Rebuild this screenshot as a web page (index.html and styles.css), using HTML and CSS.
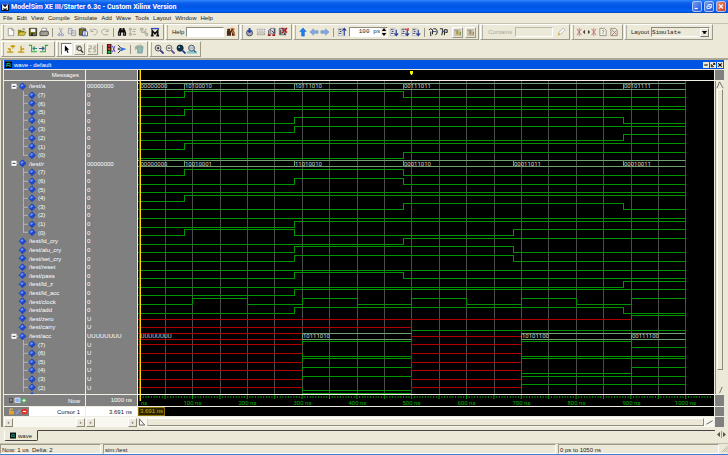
FILE: index.html
```html
<!DOCTYPE html>
<html lang="en">
<head>
<meta charset="utf-8">
<title>ModelSim XE III/Starter 6.3c - Custom Xilinx Version</title>
<link rel="stylesheet" href="styles.css">
</head>
<body>
<svg class="defs" aria-hidden="true">
  <symbol id="app" viewBox="0 0 9 9"><path fill="#111" d="M0 0h9v9H0z"/><path fill="#3a63d8" d="M0 0h9v2H0z"/><path fill="none" stroke="#fff" stroke-width="1.4" d="M2 8V3l2.5 3L7 3v5"/></symbol>
  <symbol id="wav" viewBox="0 0 8 8"><path d="M0 0h8v8H0z"/><path fill="none" stroke="#8aa" stroke-width=".6" d="M0 .3h8"/><path fill="none" stroke="#1fd0a0" d="M1 3.500h2v-1h2v1h2M1 6h1V5h3v1h2"/></symbol>
  <symbol id="new" viewBox="0 0 11 11"><path fill="#fff" stroke="#777" stroke-width=".7" d="M2.500 1.500h4l2 2v6h-6z"/><path fill="none" stroke="#555" stroke-width=".7" d="M6.500 1.500v2h2"/></symbol>
  <symbol id="open" viewBox="0 0 11 11"><path fill="#8a8420" d="M1 3h3l1 1h3v2H3L1 9z"/><path fill="#d8c838" stroke="#55500a" stroke-width=".6" d="M1 9.200 3 5.500h7L8 9.200z"/><path fill="none" stroke="#333" stroke-width=".7" d="M6 2.500q2-1.500 3 .5"/></symbol>
  <symbol id="save" viewBox="0 0 11 11"><path fill="#77751c" stroke="#222" stroke-width=".9" d="M1.500 1.500h8v8h-8z"/><path fill="#f4f4f0" d="M3 2h5v3.500H3z"/><path fill="#222" d="M3.500 7h4v2.500h-4z"/><path fill="#ddd" d="M6 7.500h1V9H6z"/></symbol>
  <symbol id="print" viewBox="0 0 11 11"><path fill="#fff" stroke="#555" stroke-width=".6" d="M3.500 1.500h5L7.500 5H2.500z"/><path fill="#9a9a96" stroke="#333" stroke-width=".8" d="M1 5.500 2.500 4.500h7l.8 1v3L9 9.500H1z"/><path fill="#d8c838" d="M6 7h2v1H6z"/></symbol>
  <symbol id="cut" viewBox="0 0 11 11"><path fill="none" stroke="#98a0b8" d="M3.500 1 6.500 7M7 1 4 7"/><g fill="none" stroke="#8088c0"><circle cx="3.500" cy="8.500" r="1.200"/><circle cx="7" cy="8.500" r="1.200"/></g></symbol>
  <symbol id="copy" viewBox="0 0 11 11"><path fill="#e8e6e0" stroke="#8a90a8" stroke-width=".8" d="M1.500 1.500h4v6h-4zM5 4h4.500v5.500H5z"/><path stroke="#99a" stroke-width=".6" d="M6 6h2.500M6 7.500h2.500M2.500 3.500h2"/></symbol>
  <symbol id="paste" viewBox="0 0 11 11"><path fill="#7a7618" stroke="#222" stroke-width=".8" d="M1.500 2h7v7h-7z"/><path fill="#ccc" stroke="#222" stroke-width=".5" d="M3.500 1h3v1.500h-3z"/><path fill="#fff" stroke="#1c2f98" stroke-width=".8" d="M5 4.500h4.500l1 1.200v4H5z"/><path stroke="#1c2f98" stroke-width=".6" d="M6 6.500h3M6 8h3"/></symbol>
  <symbol id="undo" viewBox="0 0 11 11"><path fill="none" stroke="#aaa89e" d="M2 2v3h3M2.500 4.500Q5 .8 8 3t-1 5.500H5"/></symbol>
  <symbol id="redo" viewBox="0 0 11 11"><path fill="none" stroke="#aaa89e" d="M9 2v3H6M8.500 4.500Q6 .8 3 3t1 5.500h5"/></symbol>
  <symbol id="find" viewBox="0 0 11 11"><path fill="#111" d="M3 1h2v2h1V1h2l2 5v3.500H6.500V6h-2v3.500H1V6z"/><path stroke="#fff" stroke-width=".6" d="M2.500 6v2.500M8 6v2.500"/></symbol>
  <symbol id="tree" viewBox="0 0 11 11"><g fill="none" stroke="#a5a296"><path d="M1.500 1.500h2v2h-2zM1.500 7h2v2h-2zM5 2.500h4M5 8h4M2.500 4v3M5 5h3"/></g></symbol>
  <symbol id="tree2" viewBox="0 0 11 11"><g fill="none" stroke="#a5a296"><path d="M1.500 1.500h3v2h-3zM5.500 4.500h2v2h-2zM7.500 7h2v2.500h-2zM3 4v2h2M6.500 2.500h2"/></g></symbol>
  <symbol id="mm" viewBox="0 0 11 11"><path fill="#3348c8" d="M1 1h9v1.500H1z"/><path fill="none" stroke="#111" stroke-width="1.800" d="M2.500 10V4l3 3.500 3-3.500v6M1 9.500h3M7 9.500h3"/></symbol>
  <symbol id="help-find" viewBox="0 0 11 11"><path fill="#4a2a18" d="M1.500 2h3v2h1V2h2l2 4v3.500H6.500V6h-1v3.500H1V6z"/><path fill="none" stroke="#d87830" stroke-width="1.300" d="M5 2.500q2-2 4 0L7 5l3 4"/></symbol>
  <symbol id="c1" viewBox="0 0 11 11"><circle cx="5" cy="6.500" r="3.300" fill="#aab" stroke="#445"/><path fill="#2540b0" d="M4 1h2v3h2L5 7 2 4h2z"/></symbol>
  <symbol id="c2" viewBox="0 0 11 11"><path fill="none" stroke="#77a" stroke-dasharray="1 1" d="M1 2.500h9M1 4.500h9"/><path fill="#aaa89e" d="M1 6h9v3H1z"/><path stroke="#fff" stroke-width=".7" d="M2 7.500h7"/></symbol>
  <symbol id="c3" viewBox="0 0 11 11"><path fill="#e4e4ee" stroke="#667" stroke-width=".8" d="M4 1.500h5v6H4z"/><path fill="none" stroke="#223" d="M2 9V4l2-2M5 4l3 3M8 2v5"/><path fill="#a01818" d="M1 8h3v2H1zM6 8h3v2H6z"/></symbol>
  <symbol id="c4" viewBox="0 0 11 11"><path fill="#d4d4dc" stroke="#445" stroke-width=".8" d="M1.500 1.500h7v7h-7z"/><path stroke="#222" d="M3 3v5M5 3l3 6"/><path stroke="#b01818" stroke-width="1.500" d="m4 1 6 5M10 1 4 7"/></symbol>
  <symbol id="up" viewBox="0 0 11 11"><path fill="#1684f4" stroke="#0b4ab0" stroke-width=".5" d="M5.500 1 9 5H7v5H4V5H2z"/></symbol>
  <symbol id="left" viewBox="0 0 11 11"><path fill="#7fa9e0" stroke="#5b86c0" stroke-width=".5" d="m1 5.500 4-3.500v2h5v3H5v2z"/></symbol>
  <symbol id="right" viewBox="0 0 11 11"><path fill="#7fa9e0" stroke="#5b86c0" stroke-width=".5" d="M10 5.500 6 2v2H1v3h5v2z"/></symbol>
  <symbol id="restart" viewBox="0 0 11 11"><path fill="#f4f4f4" stroke="#99a" stroke-width=".6" d="M1.500 1.500h5v8h-5z"/><path stroke="#334" d="M2 3h3M3 5h2M2 7h3"/><path fill="none" stroke="#223a9a" stroke-width="1.200" d="M8 9.500v-8M6 4l2-2.500L10 4"/></symbol>
  <symbol id="run" viewBox="0 0 11 11"><path fill="#f4f4f4" stroke="#99a" stroke-width=".6" d="M1.500 1.500h5v8h-5z"/><path stroke="#334" d="M2 3h3M3 5h2M2 7h3"/><path fill="none" stroke="#223a9a" stroke-width="1.200" d="M8 3v6M6 7l2 2.500L10 7"/></symbol>
  <symbol id="cont" viewBox="0 0 11 11"><use href="#run"/><path stroke="#d02828" stroke-width="1.200" d="M5 2.500h4M9 1v3"/></symbol>
  <symbol id="s1" viewBox="0 0 11 11"><path fill="none" stroke="#222" stroke-width="1.100" d="M1 3q2-2 4 0v5M3 5v5M6 2q3-1 4 2T8 9"/><path stroke="#334a9a" d="M5 5h4"/></symbol>
  <symbol id="s2" viewBox="0 0 11 11"><path fill="none" stroke="#222" stroke-width="1.100" d="M1 2h3v3l-1 4M6 9V3h3v3H7"/><path stroke="#334a9a" d="M3 5h4"/></symbol>
  <symbol id="prof" viewBox="0 0 11 11"><path fill="#c8c5b8" d="M1 1h9v9H1z"/><path fill="none" stroke="#888" d="M2 3h4v3"/><path stroke="#b86a50" stroke-width="1.500" d="M5 4v4"/><path stroke="#d0bb40" stroke-width="1.500" d="M7 3v6"/><path stroke="#6a9a68" stroke-width="1.500" d="M9 5v4"/></symbol>
  <symbol id="pencil" viewBox="0 0 11 11"><path fill="#fff" stroke="#999" stroke-width=".7" d="M3 6 8 1.500l2 1.500-5 5z"/><path fill="#c8a850" d="m3 6 2 2-3 1.500z"/></symbol>
  <symbol id="xl" viewBox="0 0 11 11"><path stroke="#c08080" stroke-width="1.100" d="m1 2 5 7M6 2 1 9"/><path stroke="#b07070" stroke-width=".8" d="M3.500 1v9"/><path fill="#444" d="M10 3v5L7.500 5.500z"/></symbol>
  <symbol id="xr" viewBox="0 0 11 11"><path stroke="#c08080" stroke-width="1.100" d="m5 2 5 7m0-7L5 9"/><path stroke="#b07070" stroke-width=".8" d="M7.500 1v9"/><path fill="#444" d="M1 3v5l2.500-2.500z"/></symbol>
  <symbol id="docq" viewBox="0 0 11 11"><path fill="#f4f2ea" stroke="#888678" stroke-width=".9" d="M2 1.500h5L9 3.500v6H2z"/><path fill="none" stroke="#99977a" d="M4.500 4q1-1 2 0L5.500 6v2"/></symbol>
  <symbol id="docx" viewBox="0 0 11 11"><path fill="#e8e4d8" stroke="#888678" stroke-width=".9" d="M2 1.500h5L9 3.500v6H2z"/><path stroke="#c07070" d="m3 3 5 5M8 4 3 9"/></symbol>
  <symbol id="k1" viewBox="0 0 11 11"><path fill="none" stroke="#c89a08" stroke-width="1.500" d="M1 9h7M4.500 9V5M2 5.500h3M5 2.500h5M7.500 1v4"/></symbol>
  <symbol id="k2" viewBox="0 0 11 11"><path fill="none" stroke="#c89a08" stroke-width="1.500" d="M1 9h7M4.500 9V2M4.500 5.500H8"/></symbol>
  <symbol id="e1" viewBox="0 0 11 11"><path fill="none" stroke="#35a84a" stroke-width="1.200" d="M1 1.500h3v7h6"/><path fill="none" stroke="#2b8f80" stroke-width="1.200" d="M10 5H5.500M7.500 3l-2 2 2 2"/></symbol>
  <symbol id="e2" viewBox="0 0 11 11"><path fill="none" stroke="#35a84a" stroke-width="1.200" d="M1 8.500h6v-7h3"/><path fill="none" stroke="#2b5f90" stroke-width="1.200" d="M0 5h5M3.500 3l2 2-2 2"/></symbol>
  <symbol id="ptr" viewBox="0 0 11 11"><path d="M3.500 1v7.500L5.300 7l1.500 3.300 1.200-.6-1.500-3.200h2.300z"/></symbol>
  <symbol id="zsel" viewBox="0 0 11 11"><path fill="#aaa89e" d="M1 1h6v6H1z"/><circle cx="5.500" cy="5" r="2.500" fill="#ddd" stroke="#222"/><path stroke="#222" stroke-width="1.500" d="m7 7 3 3"/></symbol>
  <symbol id="edit" viewBox="0 0 11 11"><path fill="none" stroke="#99968a" d="M1 2h3v3H1v4h3M7 2h3M6 9h3V6H7V4h3"/></symbol>
  <symbol id="stop" viewBox="0 0 11 11"><path fill="#222" d="M1 0h5v11H1z"/><circle cx="3.500" cy="2" r="1.500" fill="#e02020"/><circle cx="3.500" cy="5.500" r="1.400" fill="#d04818"/><circle cx="3.500" cy="9" r="1.500" fill="#20c030"/><path fill="none" stroke="#5a3cd0" d="m7 2 3 7M10 2 7 9"/></symbol>
  <symbol id="drv" viewBox="0 0 11 11"><path fill="none" stroke="#333" d="m1 1 3 3-3 1.500L4 7 1 10"/><path fill="#2878e0" d="M4 3.500 10.500 5.500 4 8z"/></symbol>
  <symbol id="cube" viewBox="0 0 11 11"><path fill="#8abcb0" stroke="#678" stroke-width=".6" d="M4 3h6l-1 7H4z"/><path stroke="#a0a898" stroke-width="1.500" d="M1 4 5 1.500M1 6l3-2M6 1l3 1.500"/><path stroke="#c8b850" d="M6 5v4"/></symbol>
  <symbol id="zin" viewBox="0 0 11 11"><circle cx="4.500" cy="4.500" r="3.200" fill="#eee" stroke="#333" stroke-width=".9"/><path stroke="#2a2a80" stroke-width="1.800" d="M7 7l3.500 3.500"/><path stroke="#111" d="M3 4.500h3M4.500 3v3"/></symbol>
  <symbol id="zout" viewBox="0 0 11 11"><circle cx="4.500" cy="4.500" r="3.200" fill="#eee" stroke="#555" stroke-width=".9"/><path stroke="#5a4a90" stroke-width="1.800" d="M7 7l3.500 3.500"/><path stroke="#111" d="M3 4.500h3"/></symbol>
  <symbol id="zfull" viewBox="0 0 11 11"><circle cx="4.500" cy="4.500" r="3.400" fill="#0a3558" stroke="#122"/><circle cx="3.500" cy="3.500" r="1" fill="#9cc"/><path stroke="#1a3aa0" stroke-width="1.800" d="M7 7l3.500 3.500"/></symbol>
  <symbol id="zcur" viewBox="0 0 11 11"><path fill="#7fc4cc" d="M0 8h11v2.500H0z"/><circle cx="5" cy="4.500" r="3.200" fill="#cde" stroke="#333" stroke-width=".9"/><path stroke="#8a9aa8" d="M3 4.500h4"/><path stroke="#2a4aa0" stroke-width="1.500" d="m7.500 7 2 2"/></symbol>
</svg>

<header class="title">
  <svg class="logo"><use href="#app"/></svg>
  <h1>ModelSim XE III/Starter 6.3c - Custom Xilinx Version</h1>
  <button class="wb" aria-label="Minimize"><svg viewBox="0 0 10 10"><path stroke="#fff" stroke-width="1.500" d="M2 7.500h4"/></svg></button>
  <button class="wb" aria-label="Restore"><svg viewBox="0 0 10 10"><path fill="none" stroke="#fff" d="M4 4V2.500h4v4H6.500M2.500 4.500h4v3h-4z"/></svg></button>
  <button class="wb close" aria-label="Close"><svg viewBox="0 0 10 10"><path stroke="#fff" stroke-width="1.400" d="m2.500 2.500 5 5m0-5-5 5"/></svg></button>
</header>

<nav class="menu">
  <a href="#">File</a><a href="#">Edit</a><a href="#">View</a><a href="#">Compile</a><a href="#">Simulate</a><a href="#">Add</a><a href="#">Wave</a><a href="#">Tools</a><a href="#">Layout</a><a href="#">Window</a><a href="#">Help</a>
</nav>

<div class="bars">
  <div class="bar">
    <div class="group">
      <button aria-label="New"><svg><use href="#new"/></svg></button><button aria-label="Open"><svg><use href="#open"/></svg></button><button aria-label="Save"><svg><use href="#save"/></svg></button><button aria-label="Print"><svg><use href="#print"/></svg></button><i></i><button aria-label="Cut"><svg><use href="#cut"/></svg></button><button aria-label="Copy"><svg><use href="#copy"/></svg></button><button aria-label="Paste"><svg><use href="#paste"/></svg></button><button aria-label="Undo"><svg><use href="#undo"/></svg></button><button aria-label="Redo"><svg><use href="#redo"/></svg></button><i></i><button aria-label="Find"><svg><use href="#find"/></svg></button><button aria-label="Collapse"><svg><use href="#tree"/></svg></button><button aria-label="Expand"><svg><use href="#tree2"/></svg></button><button aria-label="ModelSim"><svg><use href="#mm"/></svg></button>
    </div>
    <div class="group wide">
      <label for="help">Help</label><input id="help" type="text"><button aria-label="Search help"><svg><use href="#help-find"/></svg></button>
    </div>
    <div class="group">
      <button aria-label="Compile"><svg><use href="#c1"/></svg></button><button aria-label="Compile all"><svg><use href="#c2"/></svg></button><button aria-label="Simulate"><svg><use href="#c3"/></svg></button><button aria-label="End simulation"><svg><use href="#c4"/></svg></button>
    </div>
    <div class="group">
      <button aria-label="Up"><svg><use href="#up"/></svg></button><button aria-label="Back"><svg><use href="#left"/></svg></button><button aria-label="Forward"><svg><use href="#right"/></svg></button><i></i><button aria-label="Restart"><svg><use href="#restart"/></svg></button>
      <span class="spin"><input type="text" value="100 ps" aria-label="Run length"><svg viewBox="0 0 6 9"><path d="m3 0 2.500 3.500h-5zM3 9 .5 5.500h5z"/></svg></span>
      <button aria-label="Run"><svg><use href="#run"/></svg></button><button aria-label="Continue run"><svg><use href="#cont"/></svg></button><button aria-label="Run all"><svg><use href="#run"/></svg></button><i></i><button aria-label="Step"><svg><use href="#s1"/></svg></button><button aria-label="Step over"><svg><use href="#s2"/></svg></button><button class="flat" aria-label="Performance profile"><svg><use href="#prof"/></svg></button><button class="flat" aria-label="Memory profile"><svg><use href="#prof"/></svg></button>
    </div>
    <div class="group filter dim">
      <label for="contains">Contains</label><input id="contains" type="text"><button aria-label="Clear filter"><svg><use href="#pencil"/></svg></button>
    </div>
    <div class="group">
      <button aria-label="Previous error"><svg><use href="#xl"/></svg></button><button aria-label="Next error"><svg><use href="#xr"/></svg></button><button aria-label="Query"><svg><use href="#docq"/></svg></button><button aria-label="Delete"><svg><use href="#docx"/></svg></button>
    </div>
    <div class="group lay">
      <label for="layout">Layout</label><span class="drop"><select id="layout"><option>Simulate</option></select><svg viewBox="0 0 9 9"><path d="M1 2.500h7l-2 2v1.500H3V4.500z"/></svg></span>
    </div>
  </div>
  <div class="bar">
    <div class="group roomy">
      <button aria-label="Insert cursor"><svg><use href="#k1"/></svg></button><button aria-label="Delete cursor"><svg><use href="#k2"/></svg></button><button aria-label="Previous transition"><svg><use href="#e1"/></svg></button><button aria-label="Next transition"><svg><use href="#e2"/></svg></button>
    </div>
    <div class="group">
      <button class="on" aria-label="Select mode"><svg><use href="#ptr"/></svg></button><button class="raised" aria-label="Zoom mode"><svg><use href="#zsel"/></svg></button><button class="raised" aria-label="Edit mode"><svg><use href="#edit"/></svg></button><i></i><button aria-label="Stop drawing"><svg><use href="#stop"/></svg></button><button aria-label="Show drivers"><svg><use href="#drv"/></svg></button><i></i><button aria-label="Dataflow"><svg><use href="#cube"/></svg></button>
    </div>
    <div class="group">
      <button aria-label="Zoom in"><svg><use href="#zin"/></svg></button><button aria-label="Zoom out"><svg><use href="#zout"/></svg></button><button aria-label="Zoom full"><svg><use href="#zfull"/></svg></button><button aria-label="Zoom on cursor"><svg><use href="#zcur"/></svg></button>
    </div>
  </div>
</div>

<main class="work">
  <div class="wtitle">
    <svg class="wico"><use href="#wav"/></svg>
    <h2>wave - default</h2>
    <button aria-label="Minimize wave"><svg viewBox="0 0 7 7"><path stroke="#000" stroke-width="1.200" d="M1.500 3.500h4"/></svg></button>
    <button aria-label="Undock wave"><svg viewBox="0 0 7 7"><path fill="none" stroke="#000" d="M1.500 2.500v3h3M3.500 1.500h2v2M2.500 4.500l3-3"/></svg></button>
    <button aria-label="Close wave"><svg viewBox="0 0 7 7"><path stroke="#000" stroke-width="1.200" d="m1.500 1.500 4 4m0-4-4 4"/></svg></button>
  </div>
  <div class="wave">
    <div class="gray msg">Messages</div>
    <div class="gray"></div>
    <div class="black"><svg id="head"></svg></div>
    <div class="gray"></div>

    <ul class="gray rows" id="names"></ul>
    <ul class="gray rows vals" id="values"></ul>
    <div class="black"><svg id="plot"></svg></div>
    <div class="vbar"><svg viewBox="0 0 9 9"><path fill="none" stroke="#666" d="M1 8 4 1l4 7"/></svg><span></span><svg viewBox="0 0 9 9"><path fill="none" stroke="#666" d="M4 8l3-7"/></svg></div>

    <div class="gray now"><svg viewBox="0 0 20 7"><path fill="#555" d="M1 1h4v5H1z"/><path fill="none" stroke="#ccc" d="M2 3h2"/><path fill="#8fb4ec" stroke="#dde8ff" stroke-width=".8" d="M7 1h5v4.500H7z"/><circle cx="16" cy="3.500" r="2.600" fill="#4db45a"/><path stroke="#fff" d="M14.500 3.500h3M16 2v3"/></svg><span>Now</span></div>
    <div class="gray right">1000 ns</div>
    <div class="black"><svg id="scale"></svg></div>
    <div class="gray"></div>

    <div class="white cur"><span class="tools"><svg viewBox="0 0 20 7"><path fill="#e8a030" d="M1 3h5v3.500H1z"/><path fill="none" stroke="#e8c060" d="M2 3V1h3"/><path stroke="#7f9ff0" stroke-width="1.500" d="m8 6 4-4"/><circle cx="16.500" cy="3.500" r="3" fill="#e03830"/><path stroke="#fff" d="M15 3.500h3"/></svg></span><span>Cursor 1</span></div>
    <div class="white right">3.691 ns</div>
    <div class="black"><span class="flag">3.691 ns</span></div>
    <div class="gray"></div>

    <div class="hbar"><button aria-label="Scroll names left">‹</button><span></span><button aria-label="Scroll names right">›</button></div>
    <div class="hbar"><button aria-label="Scroll values left">‹</button><span></span><button aria-label="Scroll values right">›</button></div>
    <div class="hbar big"><svg viewBox="0 0 9 9"><path fill="none" stroke="#555" d="m1 1 6 7M1 1v7h6"/></svg><span></span><svg viewBox="0 0 9 9"><path fill="none" stroke="#555" d="m1 7 7-4"/></svg></div>
    <div class="gray"></div>
  </div>
</main>

<div class="tabs">
  <button class="tab"><svg class="wico"><use href="#wav"/></svg>wave</button>
  <div class="line"></div>
  <div class="nudge"><svg viewBox="0 0 9 7"><path fill="#555" d="M3 1v5L0 3.500zM6 1v5l3-2.500z"/><path fill="#999" d="M4 0h1v7H4z"/></svg></div>
</div>

<footer class="status">
  <div class="now-cell">Now: 1 us&nbsp; Delta: 2</div>
  <div class="path-cell">sim:/test</div>
  <div class="range-cell">0 ps to 1050 ns</div>
  <svg class="grip" viewBox="0 0 9 9"><path stroke="#a8a590" d="m1 9 8-8M4 9l5-5M7 9l2-2"/></svg>
</footer>
<script src="wave.js"></script>
</body>
</html>
```
FILE: styles.css
```css
* { box-sizing: border-box; }
html, body { height: 100%; margin: 0; }
body {
  display: flex;
  flex-direction: column;
  overflow: hidden;
  background: #ece9d8;
  border-bottom: 1px solid #3f7fd0;
  color: #222;
  font: 6px/8px "Liberation Sans", sans-serif;
}
h1, h2, ul { margin: 0; padding: 0; list-style: none; font-size: inherit; }
button, input, select { margin: 0; padding: 0; border: 0; font: inherit; color: inherit; background: none; border-radius: 0; }
svg { display: block; }
.defs { position: absolute; width: 0; height: 0; }

.title {
  flex: none;
  display: flex;
  align-items: center;
  gap: 2px;
  height: 13px;
  padding: 0 2px 0 1px;
  background: linear-gradient(#2f86f8, #0a5cec 25%, #0055e5 55%, #0064fa 85%, #0040b8);
}
.title h1 { flex: 1; color: #fff; font: 700 7px/8px "Roboto", sans-serif; }
.logo { width: 8px; height: 8px; }
.wb { width: 10px; height: 11px; border: 1px solid #a9c4f8; border-radius: 2px; background: linear-gradient(135deg, #6f9cf4, #2456d8); }
.wb svg { width: 8px; height: 9px; }
.close { background: linear-gradient(135deg, #f09078, #d03c14); }

.menu { flex: none; display: flex; gap: 4px; height: 10px; padding: 1px 3px; }
.menu a { color: #222; text-decoration: none; }

.bars { flex: none; padding-left: 1px; border-top: 1px solid #c5c2b0; border-bottom: 2px solid #aca899; }
.bar { display: flex; height: 17px; }
.group {
  display: flex;
  align-items: center;
  height: 16px;
  margin-right: 1px;
  padding: 0 2px 0 3px;
  border-top: 1px solid #fff;
  border-left: 1px solid #fff;
  border-right: 1px solid #9d9a8b;
  border-bottom: 1px solid #9d9a8b;
}
.group::before { content: ""; width: 1px; height: 14px; margin-right: 2px; margin-left: -2px; background: #b5b2a2; }
.group button { width: 11px; height: 11px; }
.group button svg { width: 10px; height: 10px; }
.group i { width: 1px; height: 9px; margin: 0 3px 0 2px; background: #99968a; }
.group input { width: 38px; height: 10px; background: #fff; border: 1px solid; border-color: #8f8c7e #fff #fff #8f8c7e; }
.roomy { padding-right: 4px; }
.wide { gap: 2px; padding-right: 1px; }
.filter { gap: 3px; }
.dim { color: #aaa797; }
.dim input { background: #ece9d8; border-color: #bbb8a8 #fff #fff #bbb8a8; }
.flat { margin-left: 2px; border: 1px solid; border-color: #fff #99968a #99968a #fff; }
.group .flat svg { width: 9px; height: 9px; }
.spin { display: flex; align-items: center; margin: 0 1px; background: #fff; border: 1px solid; border-color: #8f8c7e #fff #fff #8f8c7e; height: 10px; }
.group .spin input { width: 31px; height: 8px; padding-right: 1px; border: 0; text-align: right; font: 6px/8px "Liberation Mono", monospace; }
.spin svg { width: 6px; height: 8px; background: #ece9d8; }
.lay { gap: 2px; }
.drop { display: flex; align-items: center; height: 10px; border: 1px solid; border-color: #8f8c7e #fff #fff #8f8c7e; }
.drop select { appearance: none; width: 48px; height: 8px; padding-top: 1px; font: 6px/7px "Liberation Mono", monospace; }
.drop svg { width: 9px; height: 9px; border: 1px solid; border-color: #fff #777 #777 #fff; }
.group .on, .group .raised { height: 12px; border: 1px solid; border-color: #fff #99968a #99968a #fff; }
.group .on { background: #fff; border-color: #777 #fff #fff #777; }
.group .on, .group .raised { margin-right: 2px; }
.group .on svg, .group .raised svg { width: 9px; height: 10px; }

.work { flex: 1; min-height: 0; display: flex; flex-direction: column; margin: 0 4px 0 1px; border-left: 2px solid #8d8a7c; padding-left: 1px; }
.wtitle { flex: none; display: flex; align-items: center; gap: 1px; height: 9px; padding: 0 1px; background: #0054e3; color: #fff; }
.wtitle h2 { flex: 1; margin-left: 1px; font-weight: 400; }
.wtitle button { width: 6px; height: 6px; background: #ece9d8; }
.wtitle button svg { width: 6px; height: 6px; }
.wico { width: 7px; height: 7px; }

.wave {
  flex: 1;
  min-height: 0;
  display: grid;
  grid-template-columns: 81px 51px 1fr 9px;
  grid-template-rows: 10px 1fr 11px 9px 10px;
  gap: 1px;
  margin-top: 1px;
  background: #f0eee2;
}
.wave > * { min-width: 0; min-height: 0; overflow: hidden; }
.gray { background: #808080; color: #fff; }
.black { background: #000; }
.black svg { width: 100%; height: 100%; }
.black text { fill: #d0d0d0; font: 6px "Roboto", sans-serif; }
#scale text { fill: #00b000; }
.white { background: #fff; }
.msg { padding: 1px 6px; text-align: right; }
.rows { display: grid; grid-template-rows: repeat(36, 1fr) 2px; padding-top: 1px; }
.rows li { display: flex; align-items: center; min-height: 0; line-height: 8px; white-space: nowrap; }
.rows svg { flex: none; height: 100%; overflow: visible; }
.root svg { width: 25px; }
.child svg { width: 34px; }
.vals { padding-left: 1px; }
.right { padding: 1px 5px; text-align: right; }
.now { display: flex; justify-content: space-between; align-items: center; padding: 0 5px 0 4px; }
.now svg, .tools svg { width: 20px; height: 7px; }
.cur { display: flex; justify-content: space-between; align-items: center; padding-right: 5px; }
.tools { width: 25px; height: 9px; padding: 1px 4px; background: #808080; }
.flag { display: inline-block; height: 9px; padding: 0 1px; border: 1px solid #8a7200; background: #2c2400; color: #d4b000; line-height: 7px; }
.vbar { display: flex; flex-direction: column; background: #ece9d8; border-left: 1px solid #8d8a7c; }
.vbar svg { width: 8px; height: 8px; }
.vbar span { flex: 1; margin: 0 1px 16px; border: 1px solid; border-color: #fff #8d8a7c #8d8a7c #fff; }
.hbar { display: flex; align-items: center; background: #f8f7f0; }
.hbar button { width: 9px; height: 9px; line-height: 7px; background: #ece9d8; border: 1px solid; border-color: #fff #8d8a7c #8d8a7c #fff; }
.hbar span { flex: 1; }
.hbar svg { width: 9px; height: 8px; }
.big span { height: 8px; margin-right: 1px; background: #ece9d8; border: 1px solid; border-color: #fff #8d8a7c #8d8a7c #e8dc70; }

.tabs { flex: none; display: flex; height: 12px; margin: 3px 0 1px 4px; }
.tab { display: flex; align-items: center; gap: 2px; width: 34px; height: 11px; padding: 0 5px; border: 1px solid; border-color: #ece9d8 #444 #444 #fff; border-radius: 0 0 2px 2px; }
.line { flex: 1; border-top: 1px solid #444; }
.nudge { width: 13px; padding: 1px 2px; }
.nudge svg { width: 9px; height: 7px; }

.status { flex: none; display: flex; align-items: flex-start; gap: 2px; height: 11px; border-top: 1px solid #c5c2b0; }
.status div { height: 10px; padding: 1px; border: 1px solid; border-color: #9d9a8b #fff #fff #9d9a8b; line-height: 8px; white-space: nowrap; }
.now-cell { width: 101px; }
.path-cell { flex: 1; }
.range-cell { width: 161px; }
.grip { width: 7px; height: 9px; }
```
FILE: wave.js
```javascript
const EDGE = [0, 85, 286, 485, 685, 886];
const bus = (name, times, words, rows = 8) => {
  const out = [{ name, type: 'bus', times, words }];
  for (let b = 0; b < rows; b++) {
    out.push({
      name: '(' + (7 - b) + ')', child: true, last: b === 7,
      times, levels: words.map(w => w[b])
    });
  }
  return out;
};
const sig = (name, times, levels) => [{ name: '/test/' + name, times, levels: [...levels] }];

const signals = [
  ...bus('/test/a', [0, 85, 286, 485, 886], ['00000000', '10100010', '10111010', '00111011', '00101111']),
  ...bus('/test/r', EDGE, ['00000000', '10010001', '11010010', '00011010', '00011011', '00010011']),
  ...sig('ld_cry', [0, 485], '01'),
  ...sig('alu_cry', [0, 286, 685], '010'),
  ...sig('set_cry', [0, 286, 685], '010'),
  ...sig('reset', [0], '0'),
  ...sig('pass', [0, 286, 485], '010'),
  ...sig('ld_z', [0, 886], '01'),
  ...sig('ld_acc', [0, 286], '01'),
  ...sig('clock', [0, 100, 200, 300, 400, 500, 600, 700, 800, 900, 999], '01010101010'),
  ...sig('add', [0, 286, 886], '010'),
  ...sig('zero', [0, 900], 'U1'),
  ...sig('carry', [0, 500], 'U0'),
  ...bus('/test/acc', [0, 300, 500, 700, 900], ['UUUUUUUU', '10111010', 'UUUUUUUU', '10101100', '00111100'], 7)
];

const names = document.getElementById('names');
const values = document.getElementById('values');
const gem = x => `<svg x="${x}" y="50%" overflow="visible"><path fill="#1c48d8" stroke="#16309a" stroke-width=".5" d="M0-3.500 3.500 0 0 3.500-3.500 0z"/><path fill="#6c9cff" d="M0-2.500 1 -.5-1 .5-2.500 0z"/></svg>`;
signals.forEach((s, i) => {
  let art;
  if (s.child) {
    art = `<line x1="19.500" x2="19.500" y1="0" y2="${s.last ? '50%' : '100%'}" stroke="#b4b4b4"/><line x1="19" x2="25" y1="50%" y2="50%" stroke="#b4b4b4"/>${gem(28)}`;
  } else {
    art = (s.type === 'bus'
      ? '<line x1="12" x2="16" y1="50%" y2="50%" stroke="#b4b4b4"/><svg x="10" y="50%" overflow="visible"><path fill="#fff" d="M-2.500-2.500h5v5h-5z"/><path stroke="#234" d="M-1.500 0h3"/></svg>' : '') + gem(18.5);
  }
  const cut = i === 36;
  names.insertAdjacentHTML('beforeend', `<li class="${s.child ? 'child' : 'root'}"><svg>${cut ? '<path fill="#1c48d8" d="m28 0 2 2h-4z"/>' : art}</svg>${cut ? '' : s.name}</li>`);
  values.insertAdjacentHTML('beforeend', `<li>${cut ? '' : s.type === 'bus' ? s.words[0] : s.levels[0]}</li>`);
});

const X = t => Math.round(t * 0.548 - 0.6) + 0.5;
const END = 1000;

function draw() {
  const plot = document.getElementById('plot');
  const h = plot.clientHeight;
  const pitch = (h - 3) / 36;
  const snap = v => Math.floor(v) + 0.5;
  const line = (d, c) => `<path fill="none" stroke="${c}" d="${d}"/>`;
  let grid = '', art = '', text = '';
  for (let t = 50; t <= END; t += 50) grid += `M${X(t)} 0V${h}`;
  art += line(grid, '#4c4c4c');
  signals.forEach((s, i) => {
    const c = 1 + pitch * (i + 0.5);
    const hi = snap(c - 3), mid = snap(c + 0.2), lo = snap(c + 3);
    if (s.type === 'bus') {
      s.words.forEach((w, k) => {
        const a = X(s.times[k]), b = X(s.times[k + 1] ?? END);
        if (w[0] === 'U' && k) { art += line(`M${a} ${mid}H${b}`, '#b00000'); return; }
        const col = w[0] === 'U' ? '#b00000' : '#6fa06f';
        art += line(`M${a} ${hi}H${b}M${a} ${lo}H${b}M${a} ${hi}V${lo}`, col);
        text += `<text x="${Math.max(a, 2) + 0.5}" y="${Math.round(c + 2)}">${w}</text>`;
      });
      return;
    }
    let prev = null;
    s.levels.forEach((v, k) => {
      const a = X(s.times[k]), b = X(s.times[k + 1] ?? END);
      const y = v === '1' ? hi : v === '0' ? lo : mid;
      art += line((prev === null ? '' : `M${a} ${prev}V${y}`) + `M${a - 0.5} ${y}H${b + 0.5}`, v === 'U' ? '#b00000' : '#009400');
      prev = y;
    });
  });
  const cursor = n => `<path stroke="#8a5a00" d="M1.500 0V${n}"/><path stroke="#ffd800" d="M2.500 0V${n}"/>`;
  plot.innerHTML = art + text + cursor(h);

  document.getElementById('head').innerHTML = cursor(10) + '<path fill="#ff0" d="M272 1h3v2l-1 2h-1l-1-2z"/>';

  let minor = '', major = '', labels = '';
  for (let t = 5; t <= 1048; t += 5) {
    const x = t * 0.548 - 0.3;
    if (t % 50) minor += `M${x} 1V3`; else major += `M${x} 0V4`;
  }
  for (let t = 0; t <= END; t += 100) {
    labels += t ? `<text x="${X(t)}" y="10" text-anchor="middle">${t} ns</text>` : '<text x="3" y="10">ns</text>';
  }
  document.getElementById('scale').innerHTML = line(minor, '#008c00') + line(major, '#00a800') + labels + cursor(6);
}
draw();
addEventListener('resize', draw);
```
